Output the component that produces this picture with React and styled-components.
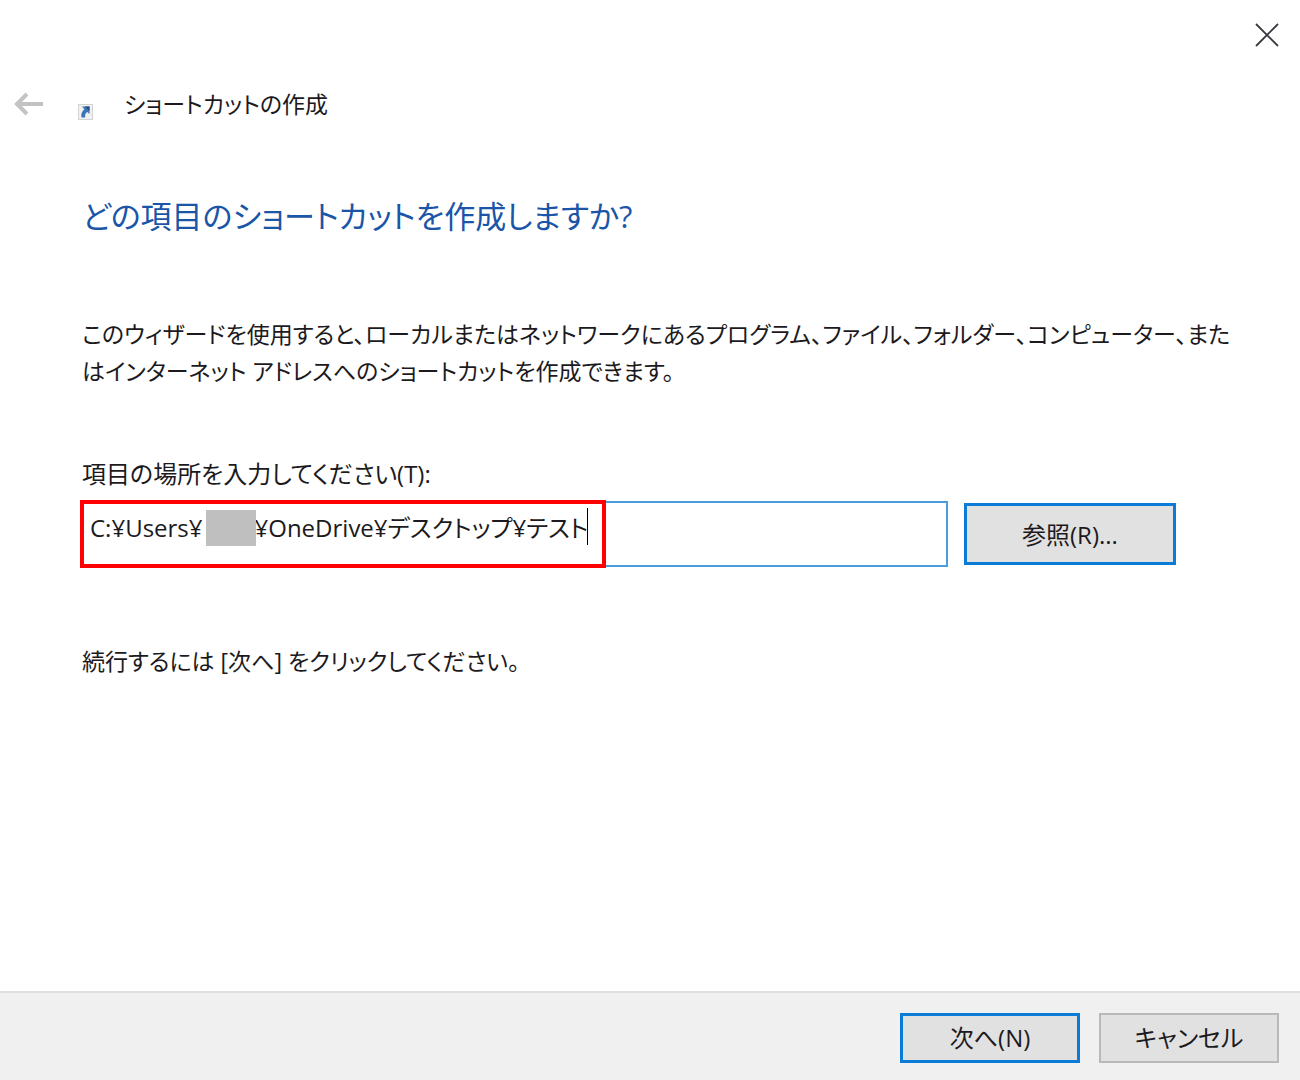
import React, { useState } from "react";
import styled, { createGlobalStyle } from "styled-components";

function App() {

  const [path, setPath] = useState('C:¥Users¥\u2003\u2003\u2009¥OneDrive¥デスクトップ¥テスト');

  return (
    <>
      <GlobalStyle />
      <Wizard>
        <TitleBar>
          <IconButton type="button" aria-label="閉じる">
            <svg width="24" height="24" viewBox="0 0 24 24" fill="none" stroke="#3c3840" strokeWidth="1.8">
              <path d="M1 1L23 23M23 1L1 23" />
            </svg>
          </IconButton>
        </TitleBar>
        <Header>
          <IconButton type="button" aria-label="戻る" disabled>
            <svg width="30" height="24" viewBox="0 0 30 24" fill="none" stroke="#c3c3c3" strokeWidth="4">
              <path d="M29 12H3M13 2L3 12L13 22" />
            </svg>
          </IconButton>
          <ShortcutIcon />
          <Title>ショートカットの作成</Title>
        </Header>
        <Content>
          <Heading>どの項目のショートカットを作成しますか?</Heading>
          <Text>
            このウィザードを使用すると、ローカルまたはネットワークにあるプログラム、ファイル、フォルダー、コンピューター、また<br />
            はインターネット アドレスへのショートカットを作成できます。
          </Text>
          <Label htmlFor="path">項目の場所を入力してください(T):</Label>
          <Row>
            <Field>
              <PathInput id="path" type="text" value={path} onChange={(e) => setPath(e.target.value)} />
              <UserMask />
              <Caret />
              <Highlight />
            </Field>
            <Button type="button" $size="large" $primary>参照(R)...</Button>
          </Row>
          <Text>続行するには [次へ] をクリックしてください。</Text>
        </Content>
        <Footer>
          <Button type="button" $primary>次へ(N)</Button>
          <Button type="button">キャンセル</Button>
        </Footer>
      </Wizard>
    </>
  );
}

// ショートカットの小さいアイコン
function ShortcutIcon() {
  return (
    <IconBox>
      <svg width="15" height="16" viewBox="0 0 15 16">
        <rect x="0.5" y="0.5" width="14" height="15" fill="#f0f0f0" stroke="#d4d4d4" />
        <path d="M4 2.5H11.5V10L9.2 8C7.4 9.4 6.8 11 7.2 13.5H3.5C2.8 10 3.8 7.4 6.4 5.2Z" fill="#3b74b8" />
        <path d="M7 2.5H11.5V7Z" fill="#26497f" />
      </svg>
    </IconBox>
  );
}

export default App;

const GlobalStyle = createGlobalStyle`
  * {
    box-sizing: border-box;
  }
  body {
    margin: 0;
    background: #fff;
    color: #1c1a20;
    font-family: "Open Sans", "Noto Sans CJK JP", sans-serif;
    font-size: 24px;
    font-feature-settings: "palt";
  }
  button, input {
    font: inherit;
    color: inherit;
    font-feature-settings: inherit;
  }
`;

const Wizard = styled.div`
  display: flex;
  flex-direction: column;
  min-height: 100vh;
`;

const TitleBar = styled.div`
  display: flex;
  justify-content: flex-end;
  align-items: center;
  height: 70px;
  padding-right: 21px;
`;

const IconButton = styled.button`
  display: flex;
  padding: 0;
  border: 0;
  background: none;
`;

const Header = styled.header`
  display: flex;
  align-items: center;
  height: 68px;
  padding-left: 14px;
`;

const IconBox = styled.span`
  display: flex;
  margin: 16px 31px 0 34px;
`;

const Title = styled.h1`
  margin: 0;
  font-size: 23px;
  line-height: 36px;
  font-weight: 400;
`;

const Content = styled.main`
  flex: 1;
  padding: 54px 80px 0;
`;

const Heading = styled.h2`
  margin: 0 0 76px;
  padding-left: 2px;
  color: #1a55a8;
  font-size: 31px;
  line-height: 48px;
  font-weight: 400;
`;

const Text = styled.p`
  margin: 0;
  padding-left: 2px;
  font-size: 23px;
  line-height: 37px;
  white-space: nowrap;
`;

const Label = styled.label`
  display: block;
  margin-top: 65px;
  padding-left: 2px;
  line-height: 37px;
`;

const Row = styled.div`
  display: flex;
  align-items: center;
  gap: 16px;
  margin: 9px 44px 76px 0;
`;

const Field = styled.div`
  position: relative;
  flex: 1;
`;

const PathInput = styled.input`
  display: block;
  width: 100%;
  height: 66px;
  padding: 0 8px 16px;
  border: 2px solid #4a9de0;
  background: #fff;
  outline: none;
`;

const UserMask = styled.span`
  position: absolute;
  top: 9px;
  left: 126px;
  width: 50px;
  height: 36px;
  background: #bfbfbf;
`;

const Caret = styled.span`
  position: absolute;
  top: 7px;
  left: 507px;
  width: 1px;
  height: 37px;
  background: #000;
`;

// 入力した部分を囲む赤枠
const Highlight = styled.span`
  position: absolute;
  top: -1px;
  left: 0;
  width: 526px;
  height: 68px;
  border: 4px solid #fe0000;
  pointer-events: none;
`;

const Button = styled.button`
  width: ${({ $size }) => ($size === "large" ? "212px" : "180px")};
  height: ${({ $size }) => ($size === "large" ? "62px" : "50px")};
  padding: 0 0 2px;
  border: ${({ $primary }) => ($primary ? "3px solid #0c7bd8" : "2px solid #b9b9b9")};
  background: #e1e1e1;
`;

const Footer = styled.footer`
  display: flex;
  justify-content: flex-end;
  align-items: center;
  gap: 19px;
  height: 89px;
  padding: 2px 21px 0 0;
  border-top: 2px solid #dfdfdf;
  background: #f0f0f0;
`;
